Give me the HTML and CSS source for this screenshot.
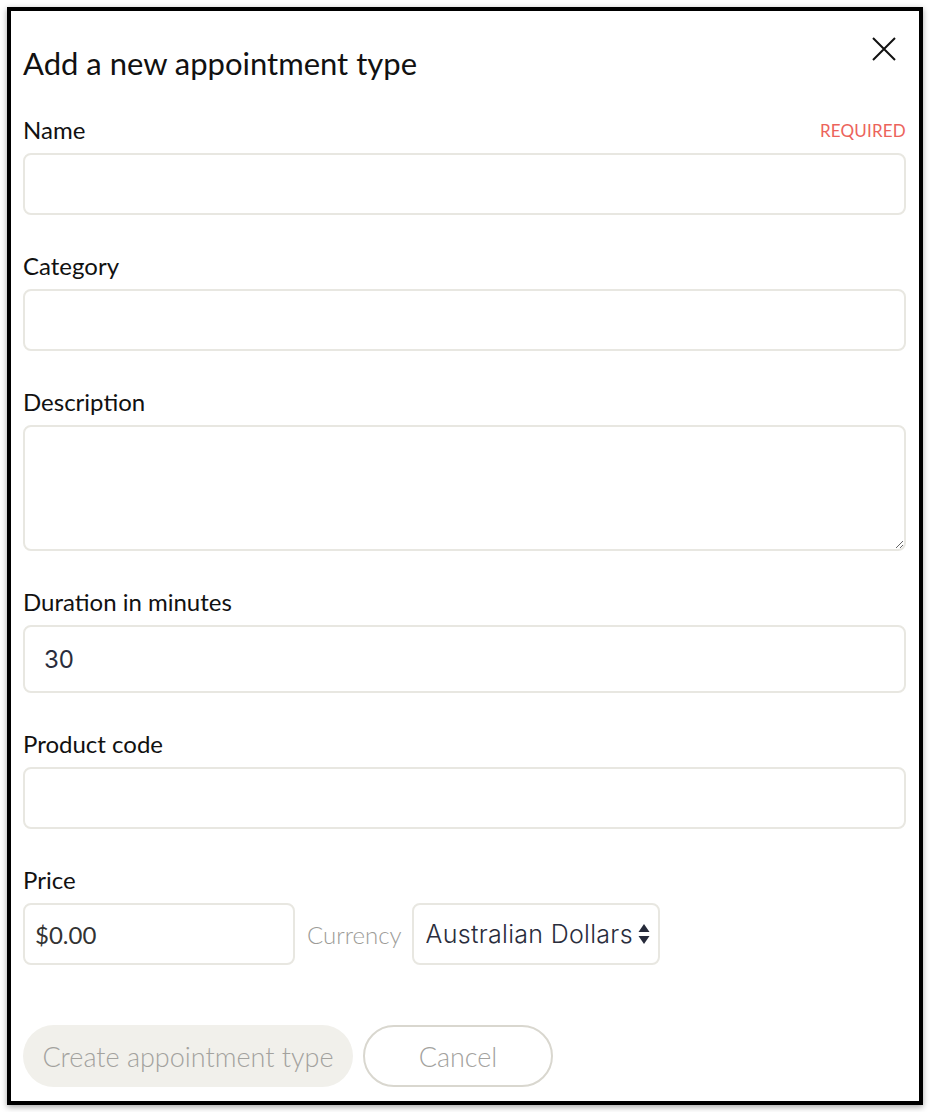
FILE: index.html
```html
<!DOCTYPE html>
<html lang="en">
<head>
    <meta charset="UTF-8">
    <meta name="viewport" content="width=device-width, initial-scale=1.0">
    <title>Add a new appointment type</title>
    <link rel="stylesheet" href="styles.css">
</head>
<body>
    <div class="modal">
        <div class="modal-head">
            <h1>Add a new appointment type</h1>
            <button class="close" aria-label="Close">
                <svg width="24" height="24" viewBox="0 0 24 24">
                    <path d="M1 1 L23 23 M23 1 L1 23" stroke="#111" stroke-width="2" fill="none"/>
                </svg>
            </button>
        </div>

        <form>
            <div class="field">
                <div class="label-row">
                    <label for="name">Name</label>
                    <span class="required">REQUIRED</span>
                </div>
                <input id="name" type="text">
            </div>

            <div class="field">
                <div class="label-row"><label for="category">Category</label></div>
                <input id="category" type="text">
            </div>

            <div class="field">
                <div class="label-row"><label for="description">Description</label></div>
                <textarea id="description"></textarea>
            </div>

            <div class="field">
                <div class="label-row"><label for="duration">Duration in minutes</label></div>
                <input id="duration" class="number" type="text" value="30">
            </div>

            <div class="field">
                <div class="label-row"><label for="code">Product code</label></div>
                <input id="code" type="text">
            </div>

            <div class="field">
                <div class="label-row"><label for="price">Price</label></div>
                <div class="price-row">
                    <input id="price" class="price" type="text" value="$0.00">
                    <span class="currency-label">Currency</span>
                    <div class="select-wrap">
                        <select>
                            <option>Australian Dollars</option>
                        </select>
                        <svg class="arrows" width="12" height="22" viewBox="0 0 12 22">
                            <path d="M6 1 L11.5 9 L0.5 9 Z M6 21 L11.5 13 L0.5 13 Z" fill="#262a3a"/>
                        </svg>
                    </div>
                </div>
            </div>

            <div class="actions">
                <button type="button" class="btn primary" disabled>Create appointment type</button>
                <button type="button" class="btn secondary">Cancel</button>
            </div>
        </form>
    </div>
</body>
</html>
```

FILE: styles.css
```css
* { box-sizing: border-box; }
body {
    margin: 0;
    padding: 7px;
    background: #fff;
    font-family: Lato, 'Noto Sans', sans-serif;
    color: #111;
}
.modal {
    width: 916px;
    height: 1098px;
    border: 4px solid #000;
    background: #fff;
    padding: 26px 13px 13px 12px;
    box-shadow: 0 2px 6px rgba(0,0,0,0.35);
}
.modal-head {
    display: flex;
    justify-content: space-between;
    align-items: flex-start;
}
h1 {
    margin: 9px 0 37px;
    font-size: 31px;
    font-weight: 400;
    line-height: 34px;
    color: #111;
}
.close {
    background: none;
    border: none;
    padding: 0;
    margin: 0 10px 0 0;
    width: 24px;
    height: 24px;
    cursor: pointer;
}
.field { margin-bottom: 38px; }
.label-row {
    display: flex;
    justify-content: space-between;
    align-items: center;
    height: 26px;
    margin-bottom: 10px;
}
label { font-size: 24px; line-height: 26px; color: #111; }
.required { font-size: 17px; color: #ec635b; letter-spacing: 0.2px; }
input, textarea, select {
    display: block;
    width: 100%;
    height: 62px;
    border: 2px solid #e8e7e1;
    border-radius: 8px;
    background: #fff;
    font-family: Inter, Roboto, sans-serif;
    font-size: 24px;
    font-weight: 400;
    color: #2a2d3c;
    outline: none;
}
input { padding: 0 19px; }
textarea { height: 126px; padding: 12px 19px; resize: vertical; }
.number { height: 68px; }
.price-row {
    display: flex;
    align-items: center;
}
.price {
    width: 272px;
    padding: 0 10px;
    font-family: Lato, sans-serif;
    font-size: 24px;
    color: #333;
}
.currency-label {
    margin: 0 10px 0 12px;
    font-size: 24px;
    font-weight: 300;
    color: #9d9c98;
}
.select-wrap { position: relative; width: 248px; }
select {
    appearance: none;
    -webkit-appearance: none;
    padding: 0 12px;
    font-size: 25px;
    font-weight: 300;
    letter-spacing: 0.3px;
}
.arrows {
    position: absolute;
    right: 10px;
    top: 20px;
    pointer-events: none;
}
.actions {
    display: flex;
    gap: 10px;
    margin-top: 60px;
}
.btn {
    height: 62px;
    border-radius: 31px;
    font-family: Lato, sans-serif;
    font-size: 27px;
    font-weight: 300;
    color: #a3a29e;
    cursor: pointer;
}
.primary {
    width: 330px;
    border: none;
    background: #f1f0eb;
}
.secondary {
    width: 190px;
    border: 2px solid #d9d7cf;
    background: #fff;
}
```
